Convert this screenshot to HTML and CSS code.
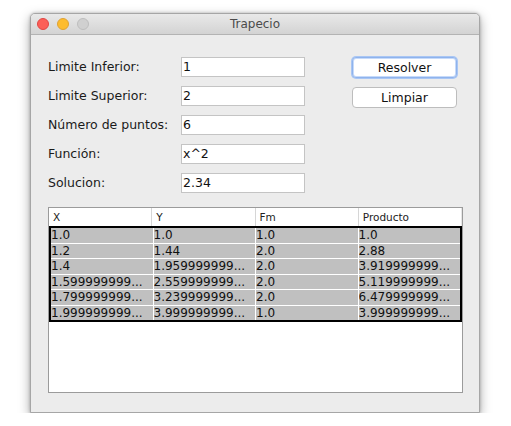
FILE: index.html
```html
<!DOCTYPE html>
<html lang="es">
<head>
<meta charset="utf-8">
<title>Trapecio</title>
<link rel="stylesheet" href="styles.css">
</head>
<body>
<div class="window">
  <div class="titlebar">
    <div class="lights">
      <span class="light red"></span>
      <span class="light yellow"></span>
      <span class="light gray"></span>
    </div>
    <div class="title">Trapecio</div>
    <div></div>
  </div>
  <div class="content">
    <div class="top">
      <div class="form">
        <label class="label">Limite Inferior:</label>
        <div class="field">1</div>
        <label class="label">Limite Superior:</label>
        <div class="field">2</div>
        <label class="label">Número de puntos:</label>
        <div class="field">6</div>
        <label class="label">Función:</label>
        <div class="field">x^2</div>
        <label class="label">Solucion:</label>
        <div class="field">2.34</div>
      </div>
      <div class="buttons">
        <div class="btn focused">Resolver</div>
        <div class="btn">Limpiar</div>
      </div>
    </div>
    <div class="table-box">
      <div class="thead">
        <div class="th">X</div>
        <div class="th">Y</div>
        <div class="th">Fm</div>
        <div class="th last">Producto</div>
      </div>
      <div class="sel">
        <div class="td">1.0</div><div class="td">1.0</div><div class="td">1.0</div><div class="td">1.0</div>
        <div class="td">1.2</div><div class="td">1.44</div><div class="td">2.0</div><div class="td">2.88</div>
        <div class="td">1.4</div><div class="td">1.959999999...</div><div class="td">2.0</div><div class="td">3.919999999...</div>
        <div class="td">1.599999999...</div><div class="td">2.559999999...</div><div class="td">2.0</div><div class="td">5.119999999...</div>
        <div class="td">1.799999999...</div><div class="td">3.239999999...</div><div class="td">2.0</div><div class="td">6.479999999...</div>
        <div class="td">1.999999999...</div><div class="td">3.999999999...</div><div class="td">1.0</div><div class="td">3.999999999...</div>
      </div>
    </div>
  </div>
</div>
</body>
</html>
```

FILE: styles.css
```css
html, body {
  margin: 0;
  background: #ffffff;
}
body {
  font-family: "DejaVu Sans", "Liberation Sans", sans-serif;
  color: #000;
}
.window {
  margin: 13px 0 0 30px;
  width: 450px;
  height: 400px;
  box-sizing: border-box;
  border: 1px solid #a6a6a6;
  border-radius: 5px 5px 0 0;
  background: #ececec;
  box-shadow: 0 4px 12px rgba(0, 0, 0, 0.35), 0 0 3px rgba(0, 0, 0, 0.25);
  display: flex;
  flex-direction: column;
  overflow: hidden;
}
.titlebar {
  height: 20px;
  border-bottom: 1px solid #b3b3b3;
  background: linear-gradient(#e9e9e9, #d3d3d3);
  display: grid;
  grid-template-columns: 1fr auto 1fr;
  align-items: center;
}
.lights {
  display: flex;
  gap: 8px;
  padding-left: 6px;
}
.light {
  width: 12px;
  height: 12px;
  border-radius: 50%;
  box-sizing: border-box;
}
.light.red {
  background: #fc5f57;
  border: 1px solid #df4744;
}
.light.yellow {
  background: #fdbc2e;
  border: 1px solid #dea236;
}
.light.gray {
  background: #d0d0d0;
  border: 1px solid #bdbdbd;
}
.title {
  font-size: 12px;
  color: #4b4b4b;
}
.content {
  flex: 1;
  display: flex;
  flex-direction: column;
  padding: 22px 16px 19px 17px;
}
.top {
  display: flex;
  align-items: flex-start;
}
.form {
  display: grid;
  grid-template-columns: 133px 124px;
  row-gap: 9px;
  align-items: center;
}
.label {
  font-size: 12.5px;
  color: #1a1a1a;
  line-height: 20px;
}
.field {
  height: 20px;
  box-sizing: border-box;
  border: 1px solid #c4c4c4;
  background: #fff;
  padding-left: 1px;
  font-size: 12.5px;
  line-height: 18px;
  color: #111;
}
.buttons {
  margin-left: 47px;
  display: flex;
  flex-direction: column;
  gap: 9px;
}
.btn {
  width: 105px;
  height: 21px;
  box-sizing: border-box;
  border: 1px solid #bdbdbd;
  border-radius: 4px;
  background: #fff;
  font-size: 12.5px;
  line-height: 19px;
  text-align: center;
  color: #111;
}
.btn.focused {
  border-color: #8fb3ec;
  box-shadow: 0 0 0 1px #a9c6f4, inset 0 0 0 1px #c6dafa;
}
.table-box {
  margin-top: 14px;
  flex: 1;
  border: 1px solid #9b9b9b;
  background: #fff;
}
.thead {
  display: grid;
  grid-template-columns: repeat(4, 1fr);
  height: 18px;
}
.th {
  font-size: 10.5px;
  line-height: 18px;
  padding-left: 4px;
  color: #222;
  border-right: 1px solid #d6d6d6;
}
.th.last {
  border-right-color: #e6e6e6;
}
.sel {
  height: 96px;
  box-sizing: border-box;
  border: 2px solid #000;
  background: #fff;
  display: grid;
  grid-template-columns: repeat(4, 1fr);
  grid-template-rows: repeat(6, 1fr);
  gap: 1px;
}
.td {
  background: #c0c0c0;
  font-size: 12px;
  line-height: 14px;
  white-space: nowrap;
  overflow: hidden;
  color: #111;
}
```
